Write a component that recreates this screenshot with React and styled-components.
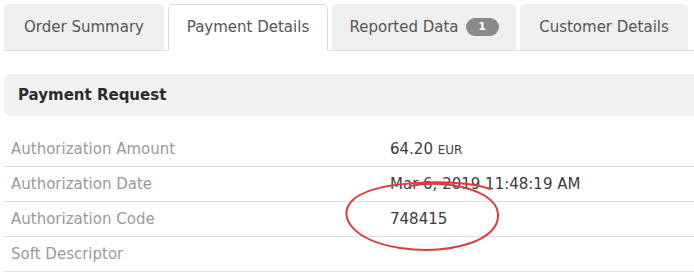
import React from 'react';
import styled, { createGlobalStyle } from 'styled-components';

const GlobalStyle = createGlobalStyle`
  body {
    margin: 0;
    background: #fff;
    font-family: "DejaVu Sans", Verdana, sans-serif;
  }
`

const Page = styled.div`
  width: 694px;
  height: 274px;
  overflow: hidden;
  padding: 4px 0 0 4px;
  box-sizing: border-box;
  position: relative;
`

const TabBar = styled.div`
  display: flex;
  gap: 4px;
  border-bottom: 1px solid #dcdcdc;
  height: 46px;
`

const Tab = styled.div`
  width: ${p => p.w}px;
  height: ${p => (p.active ? 47 : 46)}px;
  box-sizing: border-box;
  display: flex;
  align-items: center;
  justify-content: center;
  gap: 7px;
  border-radius: 5px 5px 0 0;
  font-size: 15px;
  color: #555;
  background: ${p => (p.active ? '#fff' : '#efefef')};
  border: 1px solid ${p => (p.active ? '#dcdcdc' : 'transparent')};
  border-bottom: ${p => (p.active ? '1px solid #fff' : 'none')};
  padding-bottom: 2px;
`

const Badge = styled.span`
  display: inline-flex;
  align-items: center;
  justify-content: center;
  width: 33px;
  height: 18px;
  border-radius: 9px;
  background: #8a8a8a;
  color: #fff;
  font-size: 11px;
  font-weight: bold;
`

const SectionHeader = styled.div`
  margin-top: 23px;
  height: 42px;
  background: #f2f2f2;
  border-radius: 5px 0 0 5px;
  display: flex;
  align-items: center;
  padding-left: 14px;
  font-size: 15px;
  font-weight: bold;
  color: #2b2b2b;
`

const Rows = styled.div`
  margin-top: 16px;
`

const Row = styled.div`
  display: grid;
  grid-template-columns: 379px 1fr;
  height: 35px;
  align-items: center;
  border-bottom: 1px solid #dedede;
  box-sizing: border-box;
  padding-left: 7px;
  font-size: 15px;
`

const Label = styled.span`
  color: #9a9a9a;
`

const Value = styled.span`
  color: #3c3c3c;
`

const Unit = styled.span`
  font-size: 12px;
`

const Circle = styled.svg`
  position: absolute;
  left: 340px;
  top: 178px;
  overflow: visible;
`

const rows = [
  { label: 'Authorization Amount', value: <>64.20 <Unit>EUR</Unit></> },
  { label: 'Authorization Date', value: 'Mar 6, 2019 11:48:19 AM' },
  { label: 'Authorization Code', value: '748415' },
  { label: 'Soft Descriptor', value: '' },
]

const App = () => {
  return (
    <Page>
      <GlobalStyle />
      <TabBar>
        <Tab w={160}>Order Summary</Tab>
        <Tab w={160} active>Payment Details</Tab>
        <Tab w={184}>Reported Data <Badge>1</Badge></Tab>
        <Tab w={168}>Customer Details</Tab>
      </TabBar>
      <SectionHeader>Payment Request</SectionHeader>
      <Rows>
        {rows.map(r => (
          <Row key={r.label}>
            <Label>{r.label}</Label>
            <Value>{r.value}</Value>
          </Row>
        ))}
      </Rows>
      <Circle width="170" height="80" viewBox="0 0 170 80">
        <path
          d="M 150 11 C 120 0, 40 2, 15 20 C -5 36, 10 62, 60 70 C 110 77, 160 63, 158 36 C 157 22, 140 11, 110 7 C 95 5, 80 6, 70 8"
          fill="none"
          stroke="#e03a3a"
          strokeWidth="2"
          strokeLinecap="round"
        />
      </Circle>
    </Page>
  )
}

export default App;
